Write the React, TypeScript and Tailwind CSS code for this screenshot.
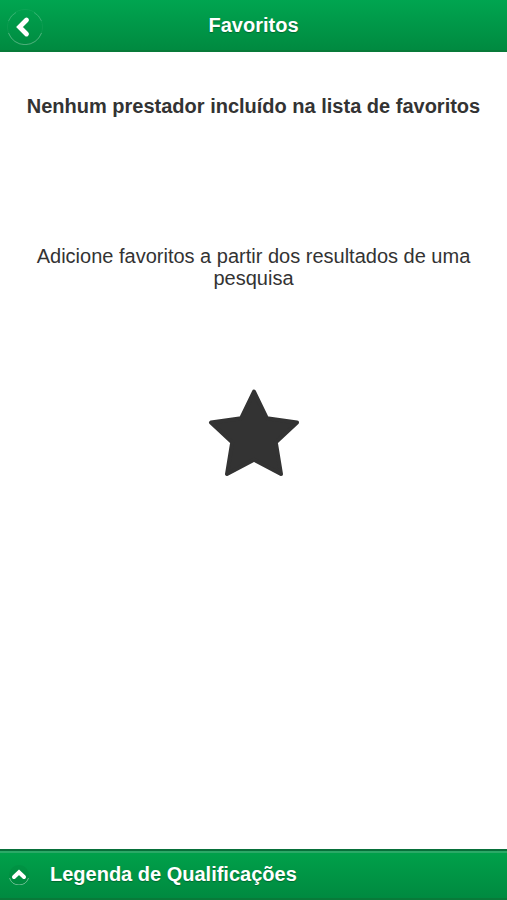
const BackIcon = () => (
  <svg viewBox="0 0 36 36" className="size-9" fill="none" aria-hidden>
    <circle cx="18" cy="18" r="17.5" stroke="#fff" strokeOpacity="0.05" />
    <path d="M1.5 12A17.5 17.5 0 0 1 9 3.5" stroke="#fff" strokeOpacity="0.18" />
    <path d="M27 3.5A17.5 17.5 0 0 1 34.5 12" stroke="#fff" strokeOpacity="0.18" />
    <path
      d="M34.5 24A17.5 17.5 0 0 1 1.5 24"
      stroke="#fff"
      strokeOpacity="0.28"
    />
    <path
      d="M19.5 11 12.5 18l7 7"
      stroke="#fff"
      strokeWidth="4.8"
      strokeLinecap="round"
    />
  </svg>
);

const UpIcon = () => (
  <svg viewBox="0 0 22 22" className="size-[22px]" fill="none" aria-hidden>
    <circle cx="11" cy="12" r="10" fill="#00421d" fillOpacity="0.08" />
    <path d="M1.5 15a10 10 0 0 0 19 0" stroke="#fff" strokeOpacity="0.4" />
    <path
      d="M6 14 11 9.2l5 4.8"
      stroke="#fff"
      strokeWidth="4"
      strokeLinecap="round"
    />
  </svg>
);

const StarIcon = () => (
  <svg
    viewBox="0 0 92 88"
    className="h-[88px] w-[92px] text-[#333]"
    fill="currentColor"
    stroke="currentColor"
    strokeWidth="4"
    strokeLinejoin="round"
    aria-hidden
  >
    <path d="M46 2.5 58.8 29.2 89 33.5 67.8 53.2 73 85 46 70.8 19 85 24.2 53.2 3 33.5 33.2 29.2Z" />
  </svg>
);

const App = () => (
  <div className="flex min-h-screen flex-col bg-white font-['Liberation_Sans',Arial,sans-serif] text-xl text-[#333]">
    <header className="grid h-[52px] grid-cols-[36px_1fr_36px] items-center border-b-2 border-[#087a39] bg-linear-to-b from-[#00a550] to-[#008a40] px-[7px]">
      <button type="button" aria-label="Voltar" className="mt-1">
        <BackIcon />
      </button>
      <h1 className="text-center leading-6 font-bold text-white text-shadow-[0_1px_1px_#006b30]">
        Favoritos
      </h1>
    </header>
    <main className="flex flex-1 flex-col items-center px-4 pt-[42px] text-center">
      <h2 className="leading-6 font-bold">
        Nenhum prestador incluído na lista de favoritos
      </h2>
      <p className="mt-[127px] leading-[22px]">
        Adicione favoritos a partir dos resultados de uma pesquisa
      </p>
      <div className="mt-[100px]">
        <StarIcon />
      </div>
    </main>
    <footer className="border-t-2 border-[#08703a]">
      <button
        type="button"
        className="flex h-[49px] w-full items-center gap-5 border-t-2 border-b-2 border-t-[#2ba967] border-b-[#087a39] bg-linear-to-b from-[#00a04a] to-[#008a40] px-2 pb-1 text-left leading-6 font-bold text-white text-shadow-[0_1px_1px_#006b30]"
      >
        <UpIcon />
        Legenda de Qualificações
      </button>
    </footer>
  </div>
);

export default App;
